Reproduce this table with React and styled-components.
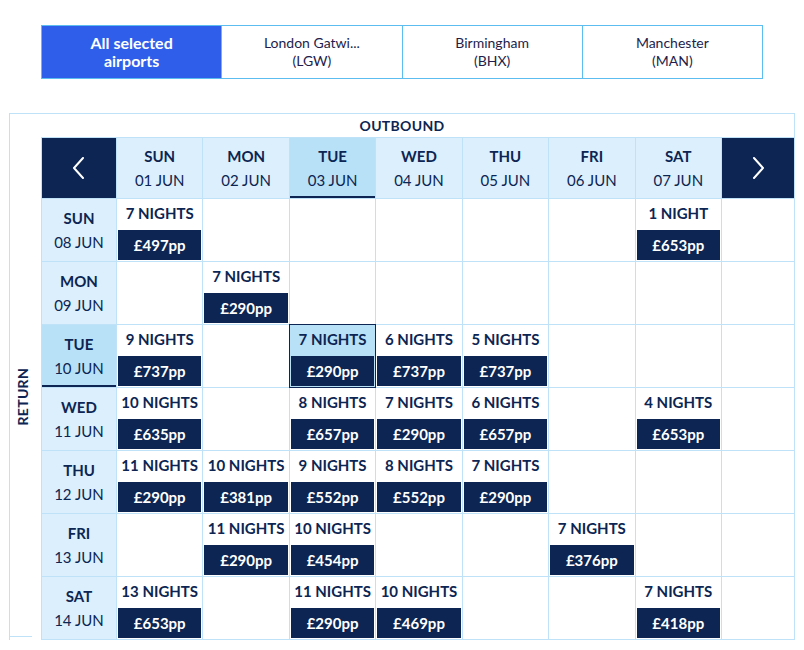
import React from "react";
import styled, { createGlobalStyle, css } from "styled-components";

const NAVY = "#0c2552";
const LINE = "#bfe2f8";
const HEAD = "#dbeffc";
const PICK = "#b8e1f8";

const Global = createGlobalStyle`
  body {
    margin: 0;
    background: #fff;
    font-family: Lato, "Noto Sans", sans-serif;
  }
`;

const Page = styled.div`
  padding: 25px 9px 10px 9px;
  width: 804px;
  box-sizing: border-box;
`;

const Tabs = styled.div`
  display: flex;
  margin-left: 32px;
  width: 722px;
  height: 54px;
  border: 1px solid #5cbdf0;
  box-sizing: border-box;
`;

const Tab = styled.div`
  flex: 1;
  display: flex;
  align-items: center;
  justify-content: center;
  text-align: center;
  font-size: 14px;
  line-height: 18px;
  color: #221d4b;
  & + & {
    border-left: 1px solid #5cbdf0;
  }
  ${(p) =>
    p.$active &&
    css`
      background: #2f5fea;
      color: #fff;
      font-weight: 700;
      font-size: 16px;
      line-height: 18px;
    `}
`;

const Frame = styled.div`
  margin-top: 34px;
  width: 786px;
  box-sizing: border-box;
  border: 1px solid ${LINE};
  border-bottom: none;
`;

const Title = styled.div`
  height: 23px;
  display: flex;
  align-items: center;
  justify-content: center;
  font-weight: 700;
  font-size: 14px;
  letter-spacing: 0.3px;
  color: ${NAVY};
`;

const Body = styled.div`
  display: flex;
  align-items: stretch;
  gap: 9px;
`;

const Side = styled.div`
  width: 22px;
  margin-bottom: 3px;
  border-bottom: 1px solid ${LINE};
  display: flex;
  align-items: center;
  justify-content: center;
  padding-top: 20px;
`;

const SideText = styled.span`
  writing-mode: vertical-rl;
  transform: rotate(180deg);
  font-weight: 700;
  font-size: 14px;
  letter-spacing: 0.3px;
  color: ${NAVY};
  margin-left: 2px;
`;

const Grid = styled.div`
  display: grid;
  grid-template-columns: 74px repeat(7, 1fr) 72px;
  grid-template-rows: 60px repeat(7, 62px);
  gap: 1px;
  padding: 1px;
  background: ${LINE};
  width: 754px;
  box-sizing: border-box;
  margin-right: -1px;
`;

const Arrow = styled.div`
  background: ${NAVY};
  display: flex;
  align-items: center;
  justify-content: center;
`;

const DayHead = styled.div`
  background: ${(p) => (p.$pick ? PICK : HEAD)};
  display: flex;
  flex-direction: column;
  align-items: center;
  justify-content: center;
  gap: 6px;
  color: ${NAVY};
  ${(p) =>
    p.$pick &&
    css`
      box-shadow: inset 0 -2px 0 ${NAVY};
    `}
`;

const DayName = styled.div`
  font-weight: 700;
  font-size: 15px;
  line-height: 18px;
`;

const DayDate = styled.div`
  font-size: 15px;
  line-height: 18px;
`;

const Cell = styled.div`
  background: #fff;
  display: flex;
  flex-direction: column;
  padding: 0 1px 1px 1px;
  position: relative;
  ${(p) =>
    p.$pick &&
    css`
      background: ${PICK};
      box-shadow: 0 0 0 1px ${NAVY};
      z-index: 1;
    `}
`;

const Nights = styled.div`
  flex: 1;
  display: flex;
  align-items: center;
  justify-content: center;
  padding-bottom: 4px;
  font-weight: 700;
  font-size: 15px;
  color: ${NAVY};
`;

const Price = styled.div`
  height: 30px;
  background: ${NAVY};
  color: #fff;
  font-weight: 700;
  font-size: 15px;
  display: flex;
  align-items: center;
  justify-content: center;
`;

const Chevron = ({ dir }) => (
  <svg width="14" height="22" viewBox="0 0 14 22">
    <polyline
      points={dir === "left" ? "11,1 2,11 11,21" : "3,1 12,11 3,21"}
      fill="none"
      stroke="#fff"
      strokeWidth="2"
      strokeLinecap="round"
      strokeLinejoin="round"
    />
  </svg>
);

const days = [
  ["SUN", "01 JUN"],
  ["MON", "02 JUN"],
  ["TUE", "03 JUN"],
  ["WED", "04 JUN"],
  ["THU", "05 JUN"],
  ["FRI", "06 JUN"],
  ["SAT", "07 JUN"],
];

const rows = [
  { day: "SUN", date: "08 JUN", cells: { 0: [7, "£497pp"], 6: [1, "£653pp"] } },
  { day: "MON", date: "09 JUN", cells: { 1: [7, "£290pp"] } },
  {
    day: "TUE",
    date: "10 JUN",
    cells: { 0: [9, "£737pp"], 2: [7, "£290pp"], 3: [6, "£737pp"], 4: [5, "£737pp"] },
  },
  {
    day: "WED",
    date: "11 JUN",
    cells: {
      0: [10, "£635pp"],
      2: [8, "£657pp"],
      3: [7, "£290pp"],
      4: [6, "£657pp"],
      6: [4, "£653pp"],
    },
  },
  {
    day: "THU",
    date: "12 JUN",
    cells: {
      0: [11, "£290pp"],
      1: [10, "£381pp"],
      2: [9, "£552pp"],
      3: [8, "£552pp"],
      4: [7, "£290pp"],
    },
  },
  { day: "FRI", date: "13 JUN", cells: { 1: [11, "£290pp"], 2: [10, "£454pp"], 5: [7, "£376pp"] } },
  {
    day: "SAT",
    date: "14 JUN",
    cells: { 0: [13, "£653pp"], 2: [11, "£290pp"], 3: [10, "£469pp"], 6: [7, "£418pp"] },
  },
];

const PICK_COL = 2;
const PICK_ROW = 2;

export default function App() {
  return (
    <Page>
      <Global />
      <Tabs>
        <Tab $active>
          All selected
          <br />
          airports
        </Tab>
        <Tab>
          London Gatwi...
          <br />
          (LGW)
        </Tab>
        <Tab>
          Birmingham
          <br />
          (BHX)
        </Tab>
        <Tab>
          Manchester
          <br />
          (MAN)
        </Tab>
      </Tabs>

      <Frame>
        <Title>OUTBOUND</Title>
        <Body>
          <Side>
            <SideText>RETURN</SideText>
          </Side>
          <Grid>
            <Arrow>
              <Chevron dir="left" />
            </Arrow>
            {days.map(([d, date], i) => (
              <DayHead key={d} $pick={i === PICK_COL}>
                <DayName>{d}</DayName>
                <DayDate>{date}</DayDate>
              </DayHead>
            ))}
            <Arrow>
              <Chevron dir="right" />
            </Arrow>

            {rows.map((r, ri) => (
              <React.Fragment key={r.date}>
                <DayHead $pick={ri === PICK_ROW}>
                  <DayName>{r.day}</DayName>
                  <DayDate>{r.date}</DayDate>
                </DayHead>
                {days.map((_, ci) => {
                  const c = r.cells[ci];
                  const pick = ri === PICK_ROW && ci === PICK_COL;
                  return (
                    <Cell key={ci} $pick={pick}>
                      {c && (
                        <>
                          <Nights>{c[0] === 1 ? "1 NIGHT" : `${c[0]} NIGHTS`}</Nights>
                          <Price>{c[1]}</Price>
                        </>
                      )}
                    </Cell>
                  );
                })}
                <Cell />
              </React.Fragment>
            ))}
          </Grid>
        </Body>
      </Frame>
    </Page>
  );
}
